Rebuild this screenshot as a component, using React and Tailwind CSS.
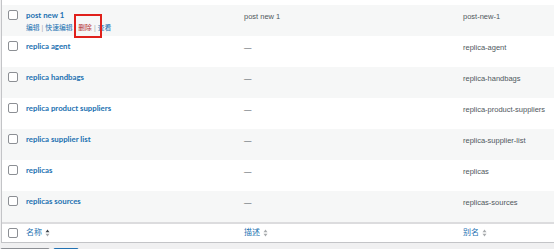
const rows = [
  { name: "post new 1", desc: "post new 1", slug: "post-new-1", actions: true },
  { name: "replica agent", desc: "—", slug: "replica-agent" },
  { name: "replica handbags", desc: "—", slug: "replica-handbags" },
  { name: "replica product suppliers", desc: "—", slug: "replica-product-suppliers" },
  { name: "replica supplier list", desc: "—", slug: "replica-supplier-list" },
  { name: "replicas", desc: "—", slug: "replicas" },
  { name: "replicas sources", desc: "—", slug: "replicas-sources" },
];

function Checkbox() {
  return <div className="w-[10px] h-[10px] rounded-[2px] border border-[#8c8f94] bg-white" />;
}

function SortIcon({ up }) {
  return (
    <svg width="5" height="8" viewBox="0 0 5 8" className="ml-[3px]">
      <path d="M0.5 3.2 L2.5 0.6 L4.5 3.2 Z" fill={up ? "#3c434a" : "#a7aaad"} />
      <path d="M0.5 4.8 L2.5 7.4 L4.5 4.8 Z" fill="#a7aaad" />
    </svg>
  );
}

export default function App() {
  return (
    <div
      className="w-[554px] h-[249px] overflow-hidden bg-[#f0f0f1] pl-px"
      style={{ fontFamily: '"Liberation Sans", "Noto Sans CJK SC", sans-serif' }}
    >
      <div className="border-l border-b border-[#c3c4c7] bg-white w-[600px]">
        <div className="h-[5px] bg-white" />
        {rows.map((r, i) => (
          <div key={i} className={`flex h-[31px] ${i % 2 === 0 ? "bg-[#f6f7f7]" : "bg-white"}`}>
            <div className="w-[24px] pl-[6px] pt-[5px] shrink-0">
              <Checkbox />
            </div>
            <div className="w-[218px] shrink-0 pt-[5px]">
              <div className="font-['Lato','Noto_Sans_CJK_SC',sans-serif] text-[7.8px] leading-[11px] font-bold text-[#2271b1]">
                {r.name}
              </div>
              {r.actions && (
                <div className="relative flex items-center text-[6.8px] leading-[10px] mt-[2px] text-[#2271b1]">
                  <span>编辑</span>
                  <span className="text-[#a7aaad] mx-[2px]">|</span>
                  <span>快速编辑</span>
                  <span className="text-[#a7aaad] mx-[2px]">|</span>
                  <span className="text-[#b32d2e]">删除</span>
                  <span className="text-[#a7aaad] mx-[2px]">|</span>
                  <span>查看</span>
                  <div className="absolute left-[48px] top-[-9px] w-[28px] h-[24px] border-2 border-[#e0201b]" />
                </div>
              )}
            </div>
            <div className="w-[219px] shrink-0 pt-[7px] text-[7.5px] leading-[10px] text-[#50575e]">{r.desc}</div>
            <div className="flex-1 pt-[7px] text-[7.5px] leading-[10px] text-[#50575e]">{r.slug}</div>
          </div>
        ))}
        <div className="flex h-[20px] items-center border-t-2 border-[#dcdcde] bg-white">
          <div className="w-[24px] pl-[6px] shrink-0">
            <Checkbox />
          </div>
          <div className="w-[218px] shrink-0 flex items-center text-[8px] text-[#2271b1]">
            名称<SortIcon up />
          </div>
          <div className="w-[219px] shrink-0 flex items-center text-[8px] text-[#2271b1]">
            描述<SortIcon />
          </div>
          <div className="flex-1 flex items-center text-[8px] text-[#2271b1]">
            别名<SortIcon />
          </div>
        </div>
      </div>
      <div className="flex gap-[3px] mt-[5px] -ml-px">
        <div className="w-[50px] h-[20px] rounded-[2px] border border-[#8c8f94] bg-[#f6f7f7]" />
        <div className="w-[26px] h-[20px] rounded-[2px] border border-[#2271b1] bg-[#f6f7f7]" />
      </div>
    </div>
  );
}
